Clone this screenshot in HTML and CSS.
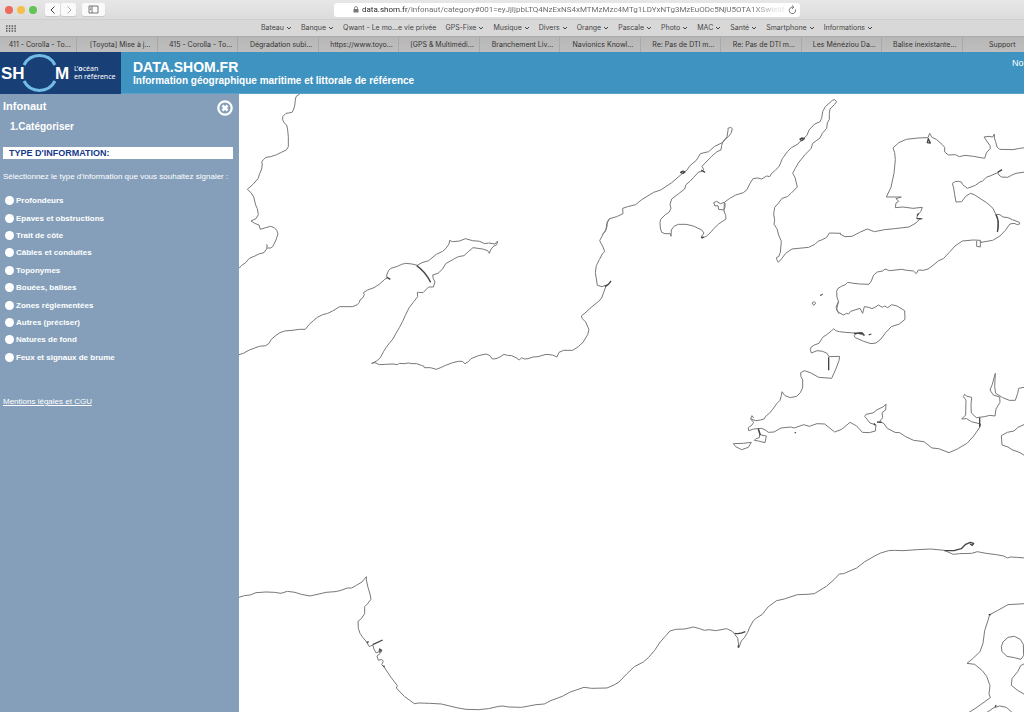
FILE: index.html
```html
<!DOCTYPE html>
<html lang="fr">
<head>
<meta charset="utf-8">
<title>DATA.SHOM.FR - Infonaut</title>
<link rel="stylesheet" href="styles.css">
</head>
<body>
<svg class="defs" aria-hidden="true"><symbol id="chev" viewBox="0 0 6 6"><path d="M1 2l2 2 2-2" fill="none" stroke="currentColor" stroke-width="1"/></symbol></svg>
<div class="browser">
  <div class="toolbar">
    <div class="controls">
      <div class="lights"><button class="light red" aria-label="Fermer"></button><button class="light yellow" aria-label="Réduire"></button><button class="light green" aria-label="Agrandir"></button></div>
      <div class="history">
        <button class="tool" aria-label="Précédent"><svg viewBox="0 0 8 10"><path d="M5.500 1.500L2 5l3.500 3.500" stroke="#444"/></svg></button>
        <button class="tool" aria-label="Suivant"><svg viewBox="0 0 8 10"><path d="M2.500 1.500L6 5 2.500 8.500" stroke="#aaa"/></svg></button>
      </div>
      <button class="tool wide" aria-label="Barre latérale"><svg viewBox="0 0 11 9"><path d="M1 1h9v7H1zM4 1v7M2 3h1M2 4.500h1" stroke="#555" stroke-width=".8"/></svg></button>
    </div>
    <div class="address">
      <svg class="lock" viewBox="0 0 6 7"><rect x=".5" y="3" width="5" height="3.500" rx=".5" fill="#777"/><path d="M1.500 3V2a1.500 1.500 0 0 1 3 0v1" fill="none" stroke="#777" stroke-width=".8"/></svg>
      <input class="url" aria-label="Adresse" value="data.shom.fr/infonaut/category#001=eyJjIjpbLTQ4NzExNS4xMTMzMzc4MTg1LDYxNTg3MzEuODc5NjU5OTA1XSwieiI6">
      <button class="reload" aria-label="Actualiser"><svg viewBox="0 0 9 10"><path d="M7.500 4.500A3.200 3.200 0 1 1 4.500 2.200h1M4 .5l1.800 1.700L4 3.900" fill="none" stroke="#555" stroke-width=".8"/></svg></button>
    </div>
  </div>
  <div class="bookmarks">
    <button class="apps" aria-label="Favoris"><svg viewBox="0 0 10 7"><path d="M0 1h10M0 3.500h10M0 6h10" stroke="#555" stroke-width="1.300" stroke-dasharray="1.500 1.300"/></svg></button>
    <nav class="favs">
      <a href="#">Bateau<svg><use href="#chev"/></svg></a><a href="#">Banque<svg><use href="#chev"/></svg></a><a href="#">Qwant - Le mo...e vie privée</a><a href="#">GPS-Fixe<svg><use href="#chev"/></svg></a><a href="#">Musique<svg><use href="#chev"/></svg></a><a href="#">Divers<svg><use href="#chev"/></svg></a><a href="#">Orange<svg><use href="#chev"/></svg></a><a href="#">Pascale<svg><use href="#chev"/></svg></a><a href="#">Photo<svg><use href="#chev"/></svg></a><a href="#">MAC<svg><use href="#chev"/></svg></a><a href="#">Santé<svg><use href="#chev"/></svg></a><a href="#">Smartphone<svg><use href="#chev"/></svg></a><a href="#">Informations<svg><use href="#chev"/></svg></a>
    </nav>
  </div>
  <div class="tabstrip"><div class="tabs">
    <a href="#">411 - Corolla - To...</a><a href="#">[Toyota] Mise à j...</a><a href="#">415 - Corolla - To...</a><a href="#">Dégradation subi...</a><a href="#">https://www.toyo...</a><a href="#">[GPS &amp; Multimédi...</a><a href="#">Branchement Liv...</a><a href="#">Navionics Knowl...</a><a href="#">Re: Pas de DTI m...</a><a href="#">Re: Pas de DTI m...</a><a href="#">Les Ménéziou Da...</a><a href="#">Balise inexistante...</a><a href="#">Support</a>
  </div></div>
</div>
<header class="banner">
  <a class="logo" href="#" aria-label="SHOM">
    <svg class="mark" viewBox="0 0 71 42"><path d="M24 13a17.500 17.500 0 0 1 31 0M24 29a17.500 17.500 0 0 0 31 0" fill="none" stroke="#74bce8" stroke-width="3"/><text x="1" y="27">SH</text><text x="55" y="27">M</text></svg>
    <span class="motto">L’<b>o</b>céan<br>en référence</span>
  </a>
  <div class="heading"><h1>DATA.SHOM.FR</h1><p>Information géographique maritime et littorale de référence</p></div>
  <a class="news" href="#">No</a>
</header>
<main class="content">
  <aside class="panel">
    <div class="panel-top"><h2>Infonaut</h2><button class="close" aria-label="Fermer Infonaut"><svg viewBox="0 0 16 16"><circle cx="8" cy="8" r="6.700" fill="none" stroke="#fff" stroke-width="2.200"/><path d="M5.500 5.500l5 5M10.500 5.500l-5 5" stroke="#fff" stroke-width="2.600"/></svg></button></div>
    <h3>1.Catégoriser</h3>
    <h4>TYPE D'INFORMATION:</h4>
    <p class="hint">Sélectionnez le type d'information que vous souhaitez signaler :</p>
    <form class="choices">
      <label><input type="radio" name="type">Profondeurs</label>
      <label><input type="radio" name="type">Epaves et obstructions</label>
      <label><input type="radio" name="type">Trait de côte</label>
      <label><input type="radio" name="type">Câbles et conduites</label>
      <label><input type="radio" name="type">Toponymes</label>
      <label><input type="radio" name="type">Bouées, balises</label>
      <label><input type="radio" name="type">Zones réglementées</label>
      <label><input type="radio" name="type">Autres (préciser)</label>
      <label><input type="radio" name="type">Natures de fond</label>
      <label><input type="radio" name="type">Feux et signaux de brume</label>
    </form>
    <a class="legal" href="#">Mentions légales et CGU</a>
  </aside>
  <section class="map" aria-label="Carte">
    <svg viewBox="239 94 785 618" preserveAspectRatio="xMinYMin slice">
      <g transform="translate(240 90) scale(.33333)">
        <path d="M179 12L168 20 166 30 164 48 160 60 156 67 146 69 138 70 128 80 128 89 132 98 140 105 143 120 145 140 145 170 139 180 124 187 110 194 92 200 78 202 70 209 65 216 67 222 65 237 59 251 54 266 40 282 22 298 33 308 41 321 47 345 52 356 55 374 48 386 33 393 44 400 57 405 61 418 77 413 92 409 103 413 110 421 114 431 108 450 98 470 92 474 82 474 72 488 56 492 45 498 28 505 16 519 5 526-3 535M80 475L82 466 78 464"/>
        <path d="M-3 794L10 790 28 780 58 769 77 767 87 760 94 748 108 736 120 728 134 723 156 721 178 718 196 718 206 705 220 692 232 682 248 674 263 670 278 663 299 650 338 650 352 644 358 637 360 630 368 624 373 614 370 608 383 600 402 593 419 582 433 569 441 564 440 555 446 541 453 535 472 529 485 523 497 520 516 522 532 526 546 518 566 512 589 493 608 484 618 475 627 462 629 451 637 455 659 453 676 446 698 452 719 454 734 461 745 459 765 462 773 453 770 464 759 470 752 480 748 490 743 482 728 477 699 473 686 484 672 497 655 500 640 508 617 521 607 538 594 550 578 555 580 566 585 576 580 591 566 591 549 608 535 607 532 607 533 620 519 638 507 654 496 676 488 694 478 713 468 730 459 747 450 757 438 773 431 784 421 803 410 813 395 820"/>
        <path class="thick" d="M530 527Q556 545 572 577M441 562l10 6"/>
      </g>
      <g transform="translate(360 220) scale(.33333)">
        <path d="M35 430L45 428 58 434 77 433 99 432 112 434 118 430 132 431 145 429 156 431 170 431 184 436 192 439 193 443 211 443 229 448 244 442 257 436 278 428 295 424 307 424 315 431 325 425 333 416 355 407 378 402 390 407 397 417 408 416 420 411 432 403 442 406 455 407 468 413 478 420 485 413 493 417 504 416 519 411 534 410 558 403 577 405 591 411 597 397 611 391 638 391 655 380 669 367 683 344 687 329 677 306 667 296 664 288 675 279 696 260 716 244 725 234 739 195 726 200 712 196 706 157 709 137 718 119 727 102 734 94 729 81 719 62 729 43 738 30 740 12 749-4"/>
        <path class="thick" d="M735 200l10-7 8-10"/>
      </g>
      <g transform="translate(580 90) scale(.33333)">
        <path d="M89 386L110 380 129 371 128 355 143 350 167 344 185 329 221 307 242 300 274 279 309 249 321 240 330 227 349 211 361 191 386 185 404 169 429 157 441 140 444 122 444 115 452 112 457 116 453 130 446 139 429 154 425 166 423 180 411 185 395 199 366 229 371 238 367 244 356 246 341 262 330 274 318 284 314 297 296 311 275 327 270 344 273 355 267 367 256 374 242 388 240 397 241 414 245 427 255 431 271 431 273 439 274 420 282 409 295 403 318 403 340 408 365 420 372 429 364 440 366 445 380 438 394 425 401 416 416 402 438 387 437 376 432 363 433 337 448 326 467 315 490 308 501 299 509 282 519 266 533 264 545 267 560 258 569 260 575 250 586 241 598 228 607 206 623 184 634 173 654 162 662 153 681 136 687 120 704 102 719 96 725 85 728 65 736 50 757 31 764 29 770 35 763 44 750 57 748 70 748 88 742 99 740 115 727 130 720 144 698 160 693 176 675 194 655 219 646 235 638 250 645 262 652 291 633 310 622 320 606 325 595 340 584 352 581 372 584 391 582 403 591 416 596 435 604 454 601 487 596 500 590 502 590 508 595 517 605 506 617 490 636 477 686 472 705 463 715 453 725 450 740 442 748 429 783 430M89 386L82 394 81 410 74 426 66 434M433 337l-12 4-11-7-9 4 4 10 9-1 2 11 15 2 4-8 0-13"/>
        <path class="thick" d="M302 247l7 3 6-4-6-3zM660 148l5 4 8-6-8-2zM364 240l11 7M363 443l8-2"/>
      </g>
      <g transform="translate(770 90) scale(.33333)">
        <path d="M210 432L225 440 246 439 269 427 292 417 313 425 344 419 374 416 417 411 438 399 448 388 458 386M440 385l3-10 9-10 5-13-28 3-30-4-23 2 2-14 8-5-8-8 16-5-45 0 14-29 9-42 4-41-2-21-5-14 17-16 23-10 35-4 30-1 5-13 6 11 15 8 16 14 8 9 0 14 11 9 21-1 12 6 17-4 25 3 34 6 5-16 12-14-1-8-18-26 15-2 11 2 5-9 0 12 4 11 4 16 8 7 40 1 20-4 40-5M765 246L738 250 724 256 713 262 694 261 687 255 683 248 660 258 649 262 638 273 630 276 616 286 592 295 578 284 574 276 565 274 556 275 547 280 551 294 554 314 558 336 575 335 587 319 601 310 613 314 631 326 650 338 669 355 678 375 684 391 683 423M678 373L690 374 699 381 714 383 727 389 748 397 749 402 742 404 732 400 720 402 706 421 690 438 668 451 633 457 631 451 610 450 577 453 555 468 538 487 520 506 506 512 489 526 474 537 461 541 445 540 439 551 430 543 410 541 395 538 378 540 358 542 345 537 338 543 322 546 311 555 304 573 297 583 268 582 244 579 233 577 226 584 214 589 203 596 200 604 201 622 206 635 202 648 200 660 207 671M620 453v16l11 2v-18"/>
        <path class="thick" d="M678 374Q690 396 682 426M683 247l13-8M440 386l14 0M441 377l5-7M472 158l3-12 6 13z"/>
        <path d="M127 638l6-3 4 4-5 7-5-4zM150 616l9-4-5 5z"/>
      </g>
      <g transform="translate(730 270) scale(.33333)">
        <path d="M325 95L318 112 324 126 340 135 350 130 356 132 362 124 390 115 398 130 403 110 417 112 426 116 438 110 445 105 457 112 464 108 473 113 485 104 501 108 524 122 525 148 508 162 484 170 467 188 453 207 438 219 423 221 401 214 376 203 372 196 385 188 394 188 403 196 384 190 346 187 328 185 317 182 311 176 303 184 290 194 278 202 267 220 253 225 244 231 241 238 244 249 261 242 278 244 291 250 297 260 329 259 327 272 318 296 305 325 266 322 241 308 223 302 212 308 213 320 218 330 218 353 211 368 200 379 181 383 165 377 156 365 154 377 150 391 141 400 128 418 118 430 109 437 102 447 91 450 77 452 62 447 71 457 66 465 55 473 56 482 71 477 95 475 108 481 115 487 132 486 153 474 182 471 193 474 221 464 238 469 261 461 284 462 314 486 335 478 360 457 380 468 397 487 418 488 436 483 438 465 420 459 404 439 408 433 429 429 440 420 462 409 468 402 467 420 456 428 458 443 449 454 462 461 472 475 495 487 509 488 527 500 551 511 582 515 606 534 626 536 657 548 682 537 711 520 731 498 748 474 752 462 724 455 710 446 695 447 707 435 708 390 700 380 704 373 711 379 725 382 723 405 724 429 739 443 764 440 779 436 795 438 798 417 810 397 809 381 790 375 780 360 787 343 792 324 796 310 794 350 797 370 818 383 838 391 856 391 863 370 866 355 886 351"/>
        <path d="M886 462L864 472 852 483 832 487 814 497 816 525 834 531 846 539 870 548 886 558M10 521l30-1 24-3-9 15-20 7-18-9zM89 494l20 4-4 20-20-5-12-2 5-5 10-3zM84 474l5 20M62 447l4-10 5 7"/>
        <path class="thick" d="M296 262v39M372 190l25-1 6 7M416 195l8-3M432 460l4 6M441 456l14 1M749 443v28M194 487l4 2M85 476l6 19"/>
      </g>
      <g transform="translate(340 570) scale(.33333)">
        <path d="M-303 82L-287 77-270 75-252 68-222 66-197 67-177 70-158 64-135 67-116 73-90 78-63 72-42 67-15 65 0 62 22 54 35 54 49 46 66 36 79 20 79 30 84 52 90 72 93 88 82 102 74 110 74 131 64 146 54 154 55 175 60 190 69 203 80 216 88 230 98 225 103 240 109 249 117 245 119 237 126 241 120 251 111 258 115 271 125 268 130 274 125 284 132 291 153 322 172 347 169 354 193 379 223 401 237 399 269 400 304 402 329 408 354 414 378 418 415 419 445 416 477 409 489 408 505 411 545 412 588 404 613 402 632 392 667 379 691 366 732 352 755 355 801 354 822 345 837 336 860 312 883 290 910 276 926 262 944 241 960 217"/>
        <path class="thick" d="M98 224l30-14M80 218l6-3M117 236l8 6M118 247l3-5M130 287l4 3"/>
      </g>
      <g transform="translate(660 530) scale(.33333)">
        <path d="M-1 338L15 320 30 303 47 298 75 297 100 291 119 296 133 301 147 299 167 302 200 296 217 304 224 313 233 324 237 352 244 333 253 323 263 307 268 294 280 272 291 263 306 254 325 230 350 212 373 207 412 194 441 193 463 191 499 169 522 149 538 132 551 131 590 114 613 96 644 78 662 69 686 62 703 61 729 62 772 59 811 57 853 61 880 73 899 71 935 70 952 65 978 70 1009 74 1031 78 1043 84 1051 81 1069 82 1095 84M1095 221L1044 224 1012 242 989 254 984 271 974 302 969 340 960 365 938 386 921 400 944 403 967 422 980 439 990 467 987 492 991 503 948 534 924 549M1083 388L1063 383 1041 379 1026 365 1024 350 1029 336 1044 322 1063 319 1081 328 1090 343 1091 376zM1095 400l-13 7-9 18-17 21-2 20 19 15 22 13M980 548l20-14 19-6 20 4 18 16"/>
        <path class="thick" d="M224 310q15 3 32-5M853 62l29 0 22-6 13-13 14-6 10 3-4 6-7-4M235 346v7M1005 530l4-4M986 254l7 0"/>
      </g>
    </svg>
  </section>
</main>
</body>
</html>
```

FILE: styles.css
```css
* { box-sizing: border-box; }
body { margin: 0; min-height: 100vh; display: flex; flex-direction: column; overflow: hidden; font-family: "Liberation Sans", Arial, sans-serif; background: #fff; }
button { border: 0; padding: 0; background: none; display: flex; align-items: center; justify-content: center; }
a { color: inherit; text-decoration: none; }
h1, h2, h3, h4, p { margin: 0; }
.defs { position: absolute; width: 0; height: 0; }

.browser { font: 7px/14px Inter, sans-serif; color: #444; }
.toolbar { display: grid; grid-template-columns: 110px 1fr; align-items: center; height: 20px; background: linear-gradient(#e8e7e7, #dddcdc); border-bottom: 1px solid #cfcece; }
.controls { display: flex; align-items: center; padding-left: 5px; }
.lights { display: flex; gap: 4px; margin-right: 8px; }
.light { width: 8px; height: 8px; border-radius: 50%; }
.red { background: #ed6a5f; }
.yellow { background: #f5bf4f; }
.green { background: #61c454; }
.history { display: flex; gap: 1px; margin-right: 6px; }
.tool { width: 15px; height: 13px; border-radius: 2px; background: #fafafa; box-shadow: 0 1px 1px #c8c8c8; }
.tool svg { width: 8px; height: 10px; fill: none; }
.tool.wide { width: 23px; }
.tool.wide svg { width: 11px; height: 9px; }
.address { justify-self: center; width: 51%; height: 14px; display: flex; align-items: center; gap: 3px; padding: 0 3px 0 19px; background: #fff; border-radius: 3px; }
.lock { width: 6px; height: 7px; }
.url { flex: 1; min-width: 0; height: 14px; border: 0; padding: 0; font: 8px/14px Roboto, sans-serif; color: transparent; background: linear-gradient(to right, #222 46px, #666 46px, #666 92%, #ddd 98%); -webkit-background-clip: text; background-clip: text; }
.reload { width: 10px; height: 12px; }
.reload svg { width: 9px; height: 10px; }
.bookmarks { display: grid; grid-template-columns: 110px 1fr; align-items: center; height: 16px; background: #d9d8d8; }
.apps { width: 10px; height: 8px; margin-left: 6px; }
.favs { display: flex; justify-content: center; gap: 9px; white-space: nowrap; }
.favs a { display: flex; align-items: center; gap: 2px; }
.favs svg { width: 6px; height: 6px; }
.tabstrip { overflow: hidden; height: 16px; background: linear-gradient(#b8b7b7, #bfbebe); border-top: 1px solid #acabab; }
.tabs { display: grid; grid-template-columns: repeat(13, 1fr); margin: 0 -19px 0 -3px; color: #333; white-space: nowrap; }
.tabs a { min-width: 0; height: 15px; line-height: 15px; padding-left: 6px; text-align: center; border-right: 1px solid #aaa9a9; }
.tabs a:last-child { padding-left: 0; }

.banner { display: flex; height: 42px; background: #3f93c1; border-bottom: 1px solid #5ba3ca; color: #fff; }
.logo { width: 121px; height: 42px; display: flex; align-items: center; gap: 3px; background: #184077; }
.mark { width: 71px; height: 42px; }
.mark text { font: bold 17px "Liberation Sans", sans-serif; fill: #fff; }
.motto { font: 7px/8px "Noto Sans", sans-serif; white-space: nowrap; }
.heading { flex: 1; padding: 8px 0 0 12px; }
.heading h1 { font: bold 14px/15px "Liberation Sans", sans-serif; }
.heading p { font: bold 10px/11px "Liberation Sans", sans-serif; }
.news { width: 12px; padding-top: 6px; font: 9px/10px "Liberation Sans", sans-serif; overflow: hidden; }

.content { flex: 1; display: flex; min-height: 0; }
.panel { width: 239px; flex: none; padding: 5px 6px 0 3px; background: #859fba; color: #fff; }
.panel-top { display: flex; justify-content: space-between; align-items: flex-start; height: 19px; }
.panel h2 { font-size: 11px; line-height: 14px; }
.close { width: 16px; height: 18px; }
.close svg { width: 16px; height: 16px; }
.panel h3 { padding-left: 7px; font-size: 10px; line-height: 18px; }
.panel h4 { margin-top: 11px; padding-left: 6px; font-size: 9px; line-height: 12px; background: #fff; color: #16398c; }
.hint { margin-top: 12px; font-size: 8px; line-height: 12px; white-space: nowrap; }
.choices { margin-top: 9px; height: 174px; display: grid; grid-auto-rows: 1fr; padding-left: 2px; }
.choices label { display: flex; align-items: center; gap: 2px; font-size: 8px; font-weight: bold; }
.choices input { appearance: none; width: 9px; height: 9px; margin: 0; border-radius: 50%; background: #fff; }
.choices input:checked { border: 3px solid #fff; background: #16398c; }
.legal { display: inline-block; margin-top: 29px; font-size: 8px; line-height: 14px; text-decoration: underline; }

.map { flex: 1; min-width: 0; position: relative; overflow: hidden; background: #fff; }
.map svg { position: absolute; inset: 0; width: 100%; height: 100%; }
.map path { fill: none; stroke: #777; stroke-width: 3; stroke-linejoin: round; }
.map .thick { stroke: #444; stroke-width: 4; }
```
